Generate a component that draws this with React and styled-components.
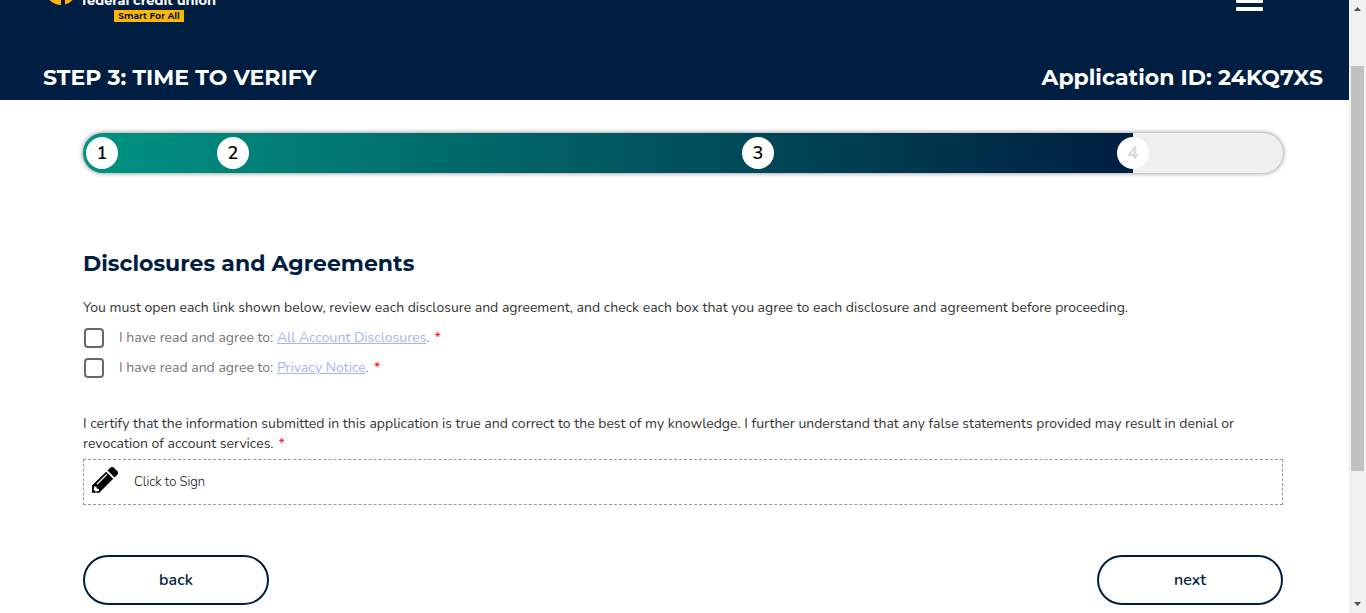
import React from 'react';
import styled, { createGlobalStyle } from 'styled-components';

const navy = '#001e41';
const bodyFont = '"Nunito", "Noto Sans", "Open Sans", sans-serif';
const headingFont = '"Montserrat", "Inter", sans-serif';

const GlobalStyle = createGlobalStyle`
  *, *::before, *::after { box-sizing: border-box; }
  body {
    margin: 0;
    background: #fff;
    color: #333;
    font-family: ${bodyFont};
    font-size: 14px;
    font-weight: 400;
    line-height: 20px;
    overflow: hidden;
  }
`;

const Header = styled.header`
  background: ${navy};
  color: #fff;
`;

const HeaderInner = styled.div`
  max-width: 1280px;
  margin: 0 auto;
`;

const BrandRow = styled.div`
  display: flex;
  align-items: flex-end;
  justify-content: space-between;
  height: 22px;
  overflow: hidden;
`;

const Brand = styled.a`
  display: flex;
  align-items: flex-end;
  gap: 5px;
  padding-left: 2px;
  color: #fff;
  text-decoration: none;
`;

const BrandMark = styled.svg`
  width: 32px;
  height: 32px;
  margin-bottom: 17px;
`;

const BrandText = styled.span`
  display: flex;
  flex-direction: column;
  align-items: center;
`;

const BrandName = styled.span`
  font: 700 13px/20px ${headingFont};
`;

const Tagline = styled.span`
  width: 70px;
  background: #ffb500;
  color: ${navy};
  font: 700 9px/12px ${headingFont};
  text-align: center;
  white-space: nowrap;
`;

const MenuButton = styled.button`
  display: flex;
  flex-direction: column;
  gap: 4px;
  width: 27px;
  padding: 0;
  margin: 0 60px 11px 0;
  border: 0;
  background: none;
`;

const MenuBar = styled.span`
  height: 4px;
  border-radius: 1px;
  background: #fff;
`;

const TitleRow = styled.div`
  display: flex;
  align-items: center;
  justify-content: space-between;
  padding: 41px 0 7px;
`;

const Title = styled.h1`
  margin: 0;
  font: 700 22px/30px ${headingFont};
`;

const Content = styled.main`
  max-width: 1200px;
  margin: 0 auto;
  padding: 33px 0 8px;
`;

const Progress = styled.ol`
  position: relative;
  height: 40px;
  margin: 0 0 76px;
  padding: 0;
  list-style: none;
  border-radius: 20px;
  background: linear-gradient(90deg, #009482, ${navy}) 0 0 / 87.5% 100% no-repeat #efefef;
  box-shadow: 0 0 5px rgba(0, 0, 0, 0.5);
`;

const Step = styled.li`
  position: absolute;
  top: 4px;
  left: max(3px, calc(${(p) => p.$at}% - 16px));
  width: 32px;
  height: 32px;
  border-radius: 50%;
  background: #fff;
  color: ${(p) => (p.$pending ? '#dcdcdc' : '#000')};
  font: ${(p) => (p.$pending ? 800 : 600)} 18px/32px ${bodyFont};
  text-align: center;
`;

const SectionTitle = styled.h2`
  margin: 0 0 19px;
  color: ${navy};
  font: 700 22px/30px ${headingFont};
`;

const Paragraph = styled.p`
  margin: 0;
`;

const Agreements = styled.div`
  display: flex;
  flex-direction: column;
  gap: 10px;
  padding: 10px 0 36px;
`;

const Agreement = styled.div`
  display: flex;
  align-items: center;
  color: #757575;
`;

const Checkbox = styled.input`
  appearance: none;
  width: 20px;
  height: 20px;
  margin: 0 15px 0 1px;
  border: 2px solid #5f6b6d;
  border-radius: 4px;
  background: #fff;
`;

const DocLink = styled.a`
  color: #a9b4ee;
  text-decoration: underline;
`;

const Required = styled.span`
  display: inline-block;
  margin-left: 5px;
  color: #f00;
`;

const SignButton = styled.button`
  display: flex;
  align-items: center;
  gap: 16px;
  width: 100%;
  height: 46px;
  margin: 5px 0 50px;
  padding: 0 7px;
  border: 1px dashed #999;
  background: #fff;
  color: #111;
  font: 300 13px/20px ${bodyFont};
`;

const PencilIcon = styled.svg`
  width: 27px;
  height: 27px;
  margin-bottom: 4px;
`;

const Actions = styled.div`
  display: flex;
  justify-content: space-between;
`;

const ActionButton = styled.button`
  width: 186px;
  height: 50px;
  border: 2px solid ${navy};
  border-radius: 25px;
  background: #fff;
  color: ${navy};
  font: 600 16px/24px ${bodyFont};
`;

const ScrollBar = styled.div`
  position: fixed;
  top: 0;
  right: 0;
  display: flex;
  flex-direction: column;
  width: 17px;
  height: 100vh;
  background: #f1f1f1;
`;

const ScrollArrow = styled.svg`
  flex: none;
  width: 17px;
  height: 17px;
`;

const ScrollTrack = styled.div`
  display: grid;
  flex: 1;
  grid-template-rows: 49fr 405fr 125fr;
  padding: 0 2px;
`;

const ScrollThumb = styled.div`
  grid-row: 2;
  background: #c1c1c1;
`;

const steps = [
  { label: 1, at: 0 },
  { label: 2, at: 12.5 },
  { label: 3, at: 56.25 },
  { label: 4, at: 87.5, pending: true },
];

const documents = [
  { id: 'disclosures', name: 'All Account Disclosures' },
  { id: 'privacy', name: 'Privacy Notice' },
];

export default function App() {
  return (
    <>
      <GlobalStyle />
      <Header>
        <HeaderInner>
          <BrandRow>
            <Brand href="#home">
              <BrandMark viewBox="0 0 32 32" aria-hidden="true">
                <path d="M16 0v32A16 16 0 0 1 16 0z" fill="#ffb500" />
                <path d="M20 0.500a16 16 0 0 1 0 31z" fill="#ffb500" />
              </BrandMark>
              <BrandText>
                <BrandName>federal credit union</BrandName>
                <Tagline>Smart For All</Tagline>
              </BrandText>
            </Brand>
            <MenuButton aria-label="Menu">
              <MenuBar />
              <MenuBar />
              <MenuBar />
            </MenuButton>
          </BrandRow>
          <TitleRow>
            <Title>STEP 3: TIME TO VERIFY</Title>
            <Title as="div">Application ID: 24KQ7XS</Title>
          </TitleRow>
        </HeaderInner>
      </Header>
      <Content>
        <Progress>
          {steps.map((s) => (
            <Step key={s.label} $at={s.at} $pending={s.pending}>{s.label}</Step>
          ))}
        </Progress>
        <SectionTitle>Disclosures and Agreements</SectionTitle>
        <Paragraph>
          You must open each link shown below, review each disclosure and agreement, and check each box that you agree to each disclosure and agreement before proceeding.
        </Paragraph>
        <Agreements>
          {documents.map((d) => (
            <Agreement key={d.id}>
              <Checkbox type="checkbox" id={d.id} />
              <label htmlFor={d.id}>
                I have read and agree to: <DocLink href={`#${d.id}`}>{d.name}</DocLink>.<Required>*</Required>
              </label>
            </Agreement>
          ))}
        </Agreements>
        <Paragraph>
          I certify that the information submitted in this application is true and correct to the best of my knowledge. I further understand that any false statements provided may result in denial or revocation of account services.<Required>*</Required>
        </Paragraph>
        <SignButton>
          <PencilIcon viewBox="0 0 27 27" aria-hidden="true">
            <path d="M16.500 3.500l2.500-2.500a3 3 0 0 1 4.200 0l2.800 2.800a3 3 0 0 1 0 4.200l-2.500 2.500z" />
            <path d="M15.200 4.800l7 7L9.500 24.500l-1 1.300H1V18.500z" />
            <path d="M15.850 4.150l7 7" stroke="#fff" strokeWidth="1.300" />
            <path d="M6 17.200L15.800 7.400" stroke="#fff" strokeWidth="1.300" />
            <path d="M3.500 19.300l1.700.2.600 1.900 2 .6.300 1.800-3.300 1-2.300-2.300z" fill="#fff" />
          </PencilIcon>
          Click to Sign
        </SignButton>
        <Actions>
          <ActionButton>back</ActionButton>
          <ActionButton>next</ActionButton>
        </Actions>
      </Content>
      <ScrollBar aria-hidden="true">
        <ScrollArrow viewBox="0 0 17 17"><path d="M5 11l3.500-4 3.500 4z" fill="#505050" /></ScrollArrow>
        <ScrollTrack><ScrollThumb /></ScrollTrack>
        <ScrollArrow viewBox="0 0 17 17"><path d="M5 6l3.500 4 3.500-4z" fill="#505050" /></ScrollArrow>
      </ScrollBar>
    </>
  );
}
